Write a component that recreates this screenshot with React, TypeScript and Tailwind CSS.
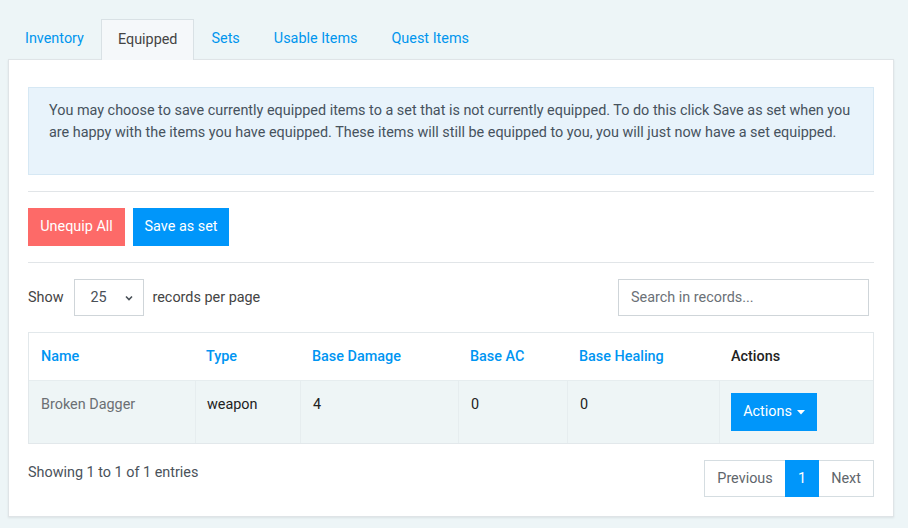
import React from "react";

const tabs = ["Inventory", "Equipped", "Sets", "Usable Items", "Quest Items"];

export default function App() {
  return (
    <div
      className="w-[908px] h-[528px] bg-[#edf5f7] overflow-hidden text-[14.4px] text-[#333]"
      style={{ fontFamily: "Roboto, 'Liberation Sans', sans-serif" }}
    >
      <div className="pt-[19px] pl-2">
        <div className="flex h-[41px] relative z-10">
          {tabs.map((t) =>
            t === "Equipped" ? (
              <div
                key={t}
                className="px-4 h-[41px] flex items-center border border-[#d9e1e5] border-b-0 bg-[#f5f8fa] text-[#444]"
              >
                {t}
              </div>
            ) : (
              <div key={t} className="px-4 h-[40px] flex items-center text-[#0095ee] border border-transparent">
                {t}
              </div>
            )
          )}
        </div>
        <div className="w-[886px] h-[458px] -mt-px bg-white border border-[#dfe4e7] shadow-[0_1px_2px_rgba(0,0,0,0.08)] px-[19px] pt-[27px]">
          <div className="bg-[#e8f3fb] border border-[#d6e8f4] px-5 pt-3 pb-[30px] text-[#46525d] leading-[22px]">
            You may choose to save currently equipped items to a set that is not currently equipped. To do this click Save as set when you are happy with the items you have equipped. These items will still be equipped to you, you will just now have a set equipped.
          </div>
          <div className="mt-[16px] border-t border-[#e1e5e8]" />
          <div className="flex gap-2 mt-4">
            <button className="h-[38px] w-[97px] bg-[#fd6a68] text-white">Unequip All</button>
            <button className="h-[38px] w-[96px] bg-[#0096fa] text-white">Save as set</button>
          </div>
          <div className="mt-4 border-t border-[#e1e5e8]" />
          <div className="flex items-center justify-between mt-4 pr-[5px]">
            <div className="flex items-center text-[#444]">
              <span>Show</span>
              <div className="ml-[10px] mr-[9px] w-[70px] h-[37px] border border-[#cfd5d9] flex items-center justify-between pl-[16px] pr-[9px] text-[#495057]">
                <span>25</span>
                <svg width="10" height="10" viewBox="0 0 10 10">
                  <path d="M2 3.5 L5 6.5 L8 3.5" fill="none" stroke="#495057" strokeWidth="1.6" />
                </svg>
              </div>
              <span>records per page</span>
            </div>
            <div className="w-[251px] h-[37px] border border-[#cfd5d9] flex items-center px-[12px] text-[#6b7177]">
              Search in records...
            </div>
          </div>
          <div className="mt-4 border border-[#e2e8eb]">
            <div className="flex h-[47px] items-center font-medium text-[#0095f2]">
              <div className="w-[166px] pl-3">Name</div>
              <div className="w-[105px] pl-[11px]">Type</div>
              <div className="w-[158px] pl-[12px]">Base Damage</div>
              <div className="w-[109px] pl-[12px]">Base AC</div>
              <div className="w-[152px] pl-[12px]">Base Healing</div>
              <div className="flex-1 pl-[12px] text-[#222]">Actions</div>
            </div>
            <div className="flex h-[63px] bg-[#eef5f6] border-t border-[#e6edef]">
              <div className="w-[166px] pl-3 pt-[13px] text-[#6b6f73]">Broken Dagger</div>
              <div className="w-[105px] pl-[11px] pt-[13px] border-l border-[#e6edef] text-[#222]">weapon</div>
              <div className="w-[158px] pl-[12px] pt-[13px] border-l border-[#e6edef] text-[#222]">4</div>
              <div className="w-[109px] pl-[12px] pt-[13px] border-l border-[#e6edef] text-[#222]">0</div>
              <div className="w-[152px] pl-[12px] pt-[13px] border-l border-[#e6edef] text-[#222]">0</div>
              <div className="flex-1 pl-[11px] pt-[12px] border-l border-[#e6edef]">
                <button className="h-[38px] w-[86px] bg-[#0096fa] text-white flex items-center justify-center gap-[5px]">
                  Actions
                  <svg width="8" height="5" viewBox="0 0 8 5">
                    <path d="M0 0 L8 0 L4 4.5 Z" fill="white" />
                  </svg>
                </button>
              </div>
            </div>
          </div>
          <div className="flex justify-between mt-4">
            <div className="text-[#4a525a] pt-[2px]">Showing 1 to 1 of 1 entries</div>
            <div className="flex h-[37px] border border-[#d5dde1] mr-0">
              <div className="w-[80px] flex items-center justify-center text-[#5f666c]">Previous</div>
              <div className="w-[34px] flex items-center justify-center bg-[#0096fa] text-white -my-px">1</div>
              <div className="w-[54px] flex items-center justify-center text-[#5f666c]">Next</div>
            </div>
          </div>
        </div>
      </div>
    </div>
  );
}
